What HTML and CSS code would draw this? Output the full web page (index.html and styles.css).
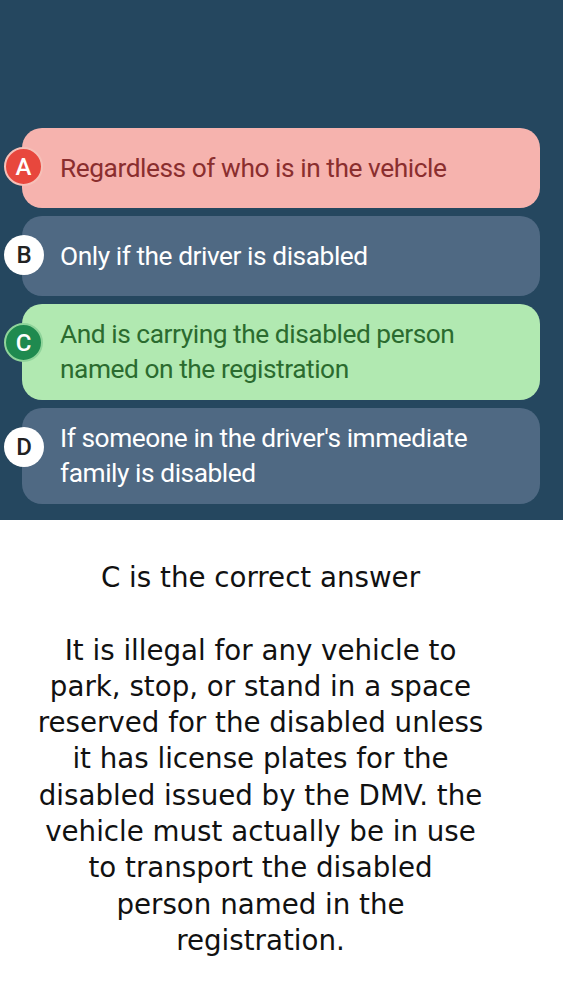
FILE: index.html
```html
<!DOCTYPE html>
<html>
<head>
<meta charset="utf-8">
<link rel="stylesheet" href="styles.css">
</head>
<body>
<section class="quiz">
  <div class="options">
    <div class="option wrong">
      <span class="badge badge-wrong">A</span>
      <span class="label">Regardless of who is in the vehicle</span>
    </div>
    <div class="option neutral">
      <span class="badge badge-neutral">B</span>
      <span class="label">Only if the driver is disabled</span>
    </div>
    <div class="option right">
      <span class="badge badge-right">C</span>
      <span class="label">And is carrying the disabled person named on the registration</span>
    </div>
    <div class="option neutral">
      <span class="badge badge-neutral">D</span>
      <span class="label">If someone in the driver's immediate family is disabled</span>
    </div>
  </div>
</section>
<section class="explain">
  <p class="title">C is the correct answer</p>
  <p class="body">It is illegal for any vehicle to<br>park, stop, or stand in a space<br>reserved for the disabled unless<br>it has license plates for the<br>disabled issued by the DMV. the<br>vehicle must actually be in use<br>to transport the disabled<br>person named in the<br>registration.</p>
</section>
</body>
</html>
```

FILE: styles.css
```css
* { box-sizing: border-box; }
html, body { margin: 0; padding: 0; }
body {
  width: 563px;
  height: 1000px;
  background: #ffffff;
  overflow: hidden;
}
.quiz {
  background: #25475f;
  height: 520px;
  padding-top: 128px;
}
.options {
  display: flex;
  flex-direction: column;
  gap: 8px;
  padding-left: 22px;
  padding-right: 23px;
}
.option {
  position: relative;
  min-height: 80px;
  border-radius: 20px;
  padding: 13px 20px 13px 38px;
  display: flex;
  align-items: center;
  font-family: Roboto, "Liberation Sans", sans-serif;
  font-size: 26.3px;
  letter-spacing: -0.45px;
  line-height: 35px;
}
.wrong { background: #f6b3ae; color: #8a2e2e; }
.neutral { background: #4f6983; color: #ffffff; }
.right { background: #b1e9b1; color: #2b6b2f; }
.badge {
  position: absolute;
  left: -18px;
  top: 19px;
  width: 39px;
  height: 39px;
  border-radius: 50%;
  display: flex;
  align-items: center;
  justify-content: center;
  font-family: Roboto, "Liberation Sans", sans-serif;
  font-weight: 500;
  font-size: 24px;
  letter-spacing: 0;
  line-height: 1;
}
.badge-wrong { background: #e8473d; color: #ffffff; border: 2px solid #f6c0b8; }
.badge-neutral { background: #ffffff; color: #222222; width: 40px; height: 40px; }
.badge-right { background: #1f8a4f; color: #ffffff; border: 2px solid #8fd49a; }
.explain {
  padding: 40px 42px 0 0;
  text-align: center;
  font-family: "DejaVu Sans", sans-serif;
  color: #111111;
  font-size: 27.7px;
  line-height: 36.3px;
}
.explain p { margin: 0; }
.title { margin-bottom: 36.3px !important; }
```
